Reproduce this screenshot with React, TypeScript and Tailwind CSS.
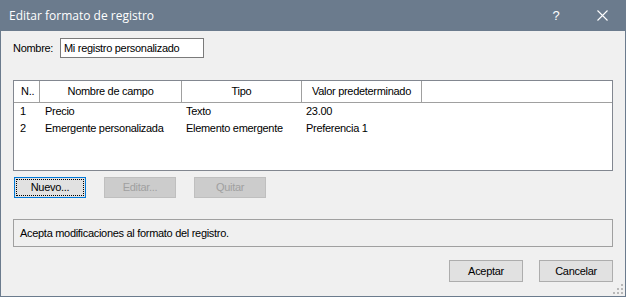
import React from 'react';

const rows = [
  { n: '1', name: 'Precio', type: 'Texto', value: '23.00' },
  { n: '2', name: 'Emergente personalizada', type: 'Elemento emergente', value: 'Preferencia 1' },
];

const font = { fontFamily: '"Liberation Sans", Arial, sans-serif' };

const App: React.FC = () => {
  return (
    <div
      className="flex h-[297px] w-[626px] flex-col border border-t-0 border-[#6b7b8d] bg-[#f0f0f0] text-[11px] tracking-[-0.3px] text-black"
      style={font}
    >
      {/* title bar */}
      <div className="flex h-[31px] shrink-0 items-center bg-[#6b7b8d] pl-[8px] tracking-normal text-white">
        <span className="flex-1 text-[12px]" style={{ fontFamily: '"Open Sans", "Liberation Sans", sans-serif' }}>
          Editar formato de registro
        </span>
        <span className="w-[46px] text-center text-[13px]">?</span>
        <span className="flex w-[46px] items-center justify-center">
          <svg width="11" height="11" viewBox="0 0 11 11" stroke="white" strokeWidth="1.1">
            <path d="M0.5 0.5L10.5 10.5M10.5 0.5L0.5 10.5" />
          </svg>
        </span>
      </div>

      <div className="flex flex-1 flex-col pl-[12px] pr-[12px]">
        {/* name */}
        <div className="mt-[7px] flex items-center">
          <span className="w-[47px]">Nombre:</span>
          <div className="flex h-[20px] w-[144px] items-center border border-[#7a7a7a] bg-white pl-[3px]">
            Mi registro personalizado
          </div>
        </div>

        {/* list */}
        <div className="mt-[22px] h-[91px] border border-[#828790] bg-white">
          <div className="flex h-[22px] border-b border-[#a0a0a0]">
            <div className="flex w-[26px] items-center border-r border-[#a0a0a0] pl-[7px]">N..</div>
            <div className="flex w-[142px] items-center justify-center border-r border-[#a0a0a0]">Nombre de campo</div>
            <div className="flex w-[120px] items-center justify-center border-r border-[#a0a0a0]">Tipo</div>
            <div className="flex w-[120px] items-center justify-center border-r border-[#a0a0a0]">Valor predeterminado</div>
          </div>
          {rows.map((r) => (
            <div key={r.n} className="flex h-[17px] items-center">
              <div className="w-[31px] pl-[6px]">{r.n}</div>
              <div className="w-[141px]">{r.name}</div>
              <div className="w-[120px]">{r.type}</div>
              <div>{r.value}</div>
            </div>
          ))}
        </div>

        {/* list buttons */}
        <div className="mt-[6px] flex gap-[18px] pl-[1px]">
          <button className="h-[21px] w-[72px] border border-[#0078d7] bg-[#e1e1e1] p-[1px]">
            <span className="flex h-full w-full items-center justify-center border border-dotted border-black">Nuevo...</span>
          </button>
          <button className="h-[21px] w-[72px] border border-[#bfbfbf] bg-[#cccccc] text-[#a0a0a0]">Editar...</button>
          <button className="h-[21px] w-[72px] border border-[#bfbfbf] bg-[#cccccc] text-[#a0a0a0]">Quitar</button>
        </div>

        {/* status */}
        <div className="mt-[21px] flex h-[28px] items-center border border-[#a0a0a0] pl-[6px]">
          Acepta modificaciones al formato del registro.
        </div>

        {/* footer */}
        <div className="mt-[13px] flex justify-end gap-[16px]">
          <button className="h-[22px] w-[74px] border border-[#adadad] bg-[#e1e1e1]">Aceptar</button>
          <button className="h-[22px] w-[74px] border border-[#adadad] bg-[#e1e1e1]">Cancelar</button>
        </div>

        <div className="mt-auto flex justify-end pb-[2px]">
          <svg width="10" height="10" viewBox="0 0 10 10" className="-mr-[10px]" fill="#b8b8b8">
            <rect x="8" y="0" width="2" height="2" />
            <rect x="4" y="4" width="2" height="2" />
            <rect x="8" y="4" width="2" height="2" />
            <rect x="0" y="8" width="2" height="2" />
            <rect x="4" y="8" width="2" height="2" />
            <rect x="8" y="8" width="2" height="2" />
          </svg>
        </div>
      </div>
    </div>
  );
};

export default App;
